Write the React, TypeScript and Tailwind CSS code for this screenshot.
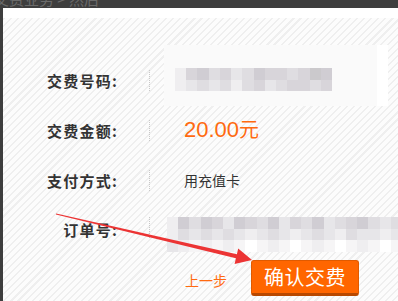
import type { ReactNode } from "react";

// gray steps used by the blurred (mosaic) fields
const shades = [
  "bg-white",
  "bg-[#f6f5f6]",
  "bg-[#efeef0]",
  "bg-[#e7e6e9]",
  "bg-[#dfdde1]",
  "bg-[#d8d5da]",
  "bg-[#d0cdd3]",
  "bg-[#cbc9cc]",
];

const codeMosaic = ["25645346554576", "23434245345545"];
const orderMosaic = [
  "264653654635463456434",
  "243434323432343243323",
  "321212101210121012101",
];

function Mosaic({ rows, cols, width }: { rows: string[]; cols: string; width: string }) {
  return (
    <div className={`grid ${cols} ${width}`}>
      {rows.map((row, r) =>
        row.split("").map((c, i) => (
          <div key={`${r}-${i}`} className={`h-[11.5px] ${shades[Number(c)]}`} />
        )),
      )}
    </div>
  );
}

function Label({ children, className = "" }: { children: ReactNode; className?: string }) {
  return (
    <div
      className={`w-[115px] shrink-0 text-right text-[15px] font-bold tracking-[1.2px] text-[#333] ${className}`}
    >
      {children}
    </div>
  );
}

function Divider({ className = "" }: { className?: string }) {
  return <div className={`ml-[31px] h-[21px] border-l border-dotted border-[#c8c8c8] ${className}`} />;
}

export default function App() {
  return (
    <div className="relative h-[301px] w-[398px] overflow-hidden bg-white font-['Noto_Sans_CJK_SC','Liberation_Sans',sans-serif] leading-none">
      <div className="h-2 overflow-hidden bg-[#3e3e3e]">
        <p className="-mt-[9px] -ml-[6px] text-[15px] text-[#6a6a6a]">交费业务 &gt; 然后</p>
      </div>

      <div className="flex h-[293px] flex-col border-l-[3px] border-[#3e3e3e]">
        <div className="h-[10px] bg-white" />

        <div className="flex-1 bg-[repeating-linear-gradient(135deg,#efefef_0px,#efefef_1.5px,#fcfcfc_1.5px,#fcfcfc_5px)] pt-[27px]">
          {/* 交费号码 */}
          <div className="flex h-[61px] items-center">
            <Label className="mt-[9px]">交费号码:</Label>
            <Divider className="mt-[9px]" />
            <div className="ml-[14px] flex h-full">
              <div className="w-[213px] bg-[#fafafa] pl-[11px] pt-[23px]">
                <Mosaic rows={codeMosaic} cols="grid-cols-14" width="w-[157px]" />
              </div>
              <div className="w-[11px] bg-white" />
            </div>
          </div>

          {/* 交费金额 */}
          <div className="flex h-[48px] items-center">
            <Label>交费金额:</Label>
            <Divider />
            <div className="ml-[34px] text-[#ff6a10]">
              <span className="font-['Liberation_Sans',sans-serif] text-[22px]">20.00</span>
              <span className="text-[20px]">元</span>
            </div>
          </div>

          {/* 支付方式 */}
          <div className="flex h-[52px] items-center">
            <Label>支付方式:</Label>
            <Divider />
            <div className="ml-[34px] text-[14px] text-[#333]">用充值卡</div>
          </div>

          {/* 订单号 */}
          <div className="flex h-[46px] items-center">
            <Label>订单号:</Label>
            <Divider className="h-[17px] self-start mt-[11px]" />
            <div className="ml-[17px] self-start mt-[11px]">
              <Mosaic rows={orderMosaic} cols="grid-cols-21" width="w-[235px]" />
            </div>
          </div>

          <div className="flex items-center pl-[182px] pt-[8px]">
            <span className="mt-[3px] text-[14px] text-[#ff6a10]">上一步</span>
            <button
              type="button"
              className="ml-[24px] flex h-[36px] w-[108px] items-center justify-center rounded-[3px] border border-[#e05a00] border-b-[3px] border-b-[#b84800] bg-[#ff6600] text-[20px] tracking-[0.5px] text-white"
            >
              确认交费
            </button>
          </div>
        </div>
      </div>

      <svg className="pointer-events-none absolute inset-0" width="398" height="301" viewBox="0 0 398 301">
        <polygon
          points="56.1,213.4 236.9,254.3 238.2,248.5 252,260 234.6,264.1 235.9,258.2 55.9,214.6"
          fill="#ec3434"
        />
      </svg>
    </div>
  );
}
